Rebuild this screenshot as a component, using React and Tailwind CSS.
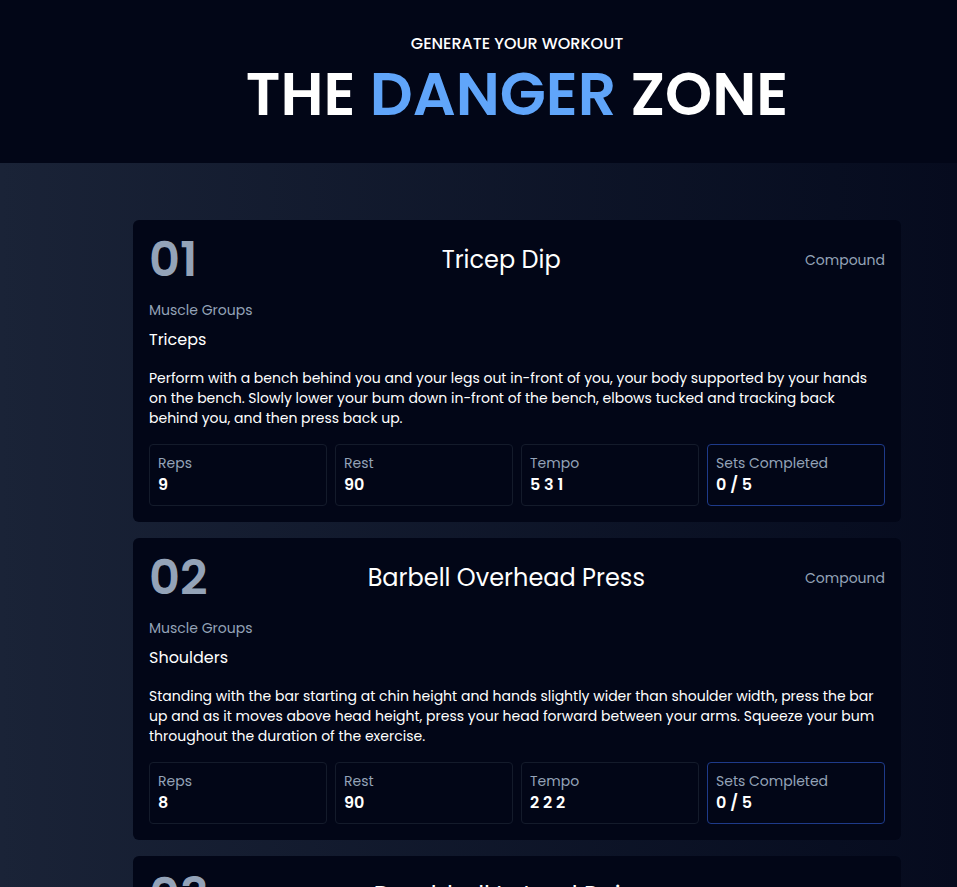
const workouts = [
  {
    name: "Tricep Dip",
    type: "Compound",
    muscles: "Triceps",
    description:
      "Perform with a bench behind you and your legs out in-front of you, your body supported by your hands on the bench. Slowly lower your bum down in-front of the bench, elbows tucked and tracking back behind you, and then press back up.",
    reps: 9,
    rest: 90,
    tempo: "5 3 1",
    sets: 5
  },
  {
    name: "Barbell Overhead Press",
    type: "Compound",
    muscles: "Shoulders",
    description:
      "Standing with the bar starting at chin height and hands slightly wider than shoulder width, press the bar up and as it moves above head height, press your head forward between your arms. Squeeze your bum throughout the duration of the exercise.",
    reps: 8,
    rest: 90,
    tempo: "2 2 2",
    sets: 5
  },
  {
    name: "Dumbbell Lateral Raise",
    type: "Accessory",
    muscles: "Shoulders",
    description:
      "Standing with a dumbbell in each hand, raise your arms out to the side until they reach shoulder height, then slowly lower them back down.",
    reps: 12,
    rest: 60,
    tempo: "2 1 2",
    sets: 4
  }
];

function Stat({ label, value, highlight }) {
  return (
    <div
      className={`flex flex-col rounded border px-2 pt-2 pb-2 ${
        highlight ? "border-[#1e3a8a]" : "border-[#141b2b]"
      }`}
    >
      <span className="text-sm leading-5 text-[#94a3b8]">{label}</span>
      <span className="text-base leading-6 font-semibold text-white">{value}</span>
    </div>
  );
}

function WorkoutCard({ index, workout }) {
  const num = String(index + 1).padStart(2, "0");
  return (
    <div className="flex flex-col rounded-md bg-[#020617] p-4">
      <div className="flex items-center justify-between">
        <h4 className="text-5xl leading-[48px] font-semibold text-[#94a3b8]">{num}</h4>
        <h2 className="text-2xl leading-8 text-white">{workout.name}</h2>
        <p className="text-sm text-[#94a3b8]">{workout.type}</p>
      </div>
      <p className="mt-4 text-sm leading-5 text-[#94a3b8]">Muscle Groups</p>
      <p className="mt-[10px] text-base leading-5 text-white">{workout.muscles}</p>
      <p className="mt-[18px] text-sm leading-5 text-white">{workout.description}</p>
      <div className="mt-4 grid grid-cols-4 gap-2">
        <Stat label="Reps" value={workout.reps} />
        <Stat label="Rest" value={workout.rest} />
        <Stat label="Tempo" value={workout.tempo} />
        <Stat label="Sets Completed" value={`0 / ${workout.sets}`} highlight />
      </div>
    </div>
  );
}

export default function App() {
  return (
    <div
      className="min-h-screen w-full overflow-hidden bg-gradient-to-r from-[#1a2337] to-[#060b1e]"
      style={{ fontFamily: 'Poppins, "Open Sans", "Noto Sans", sans-serif' }}
    >
      <div className="w-[1034px]">
        <header className="flex h-[163px] flex-col items-center bg-[#020617] pt-[34px]">
          <p className="text-base leading-5 font-medium text-white">GENERATE YOUR WORKOUT</p>
          <h1 className="mt-[8px] text-[60px] leading-[64px] font-semibold text-white">
            THE <span className="text-[#60a5fa]">DANGER</span> ZONE
          </h1>
        </header>
        <main className="mx-auto flex w-[768px] flex-col gap-4 pt-[57px] pb-10">
          {workouts.map((w, i) => (
            <WorkoutCard key={w.name} index={i} workout={w} />
          ))}
        </main>
      </div>
    </div>
  );
}
